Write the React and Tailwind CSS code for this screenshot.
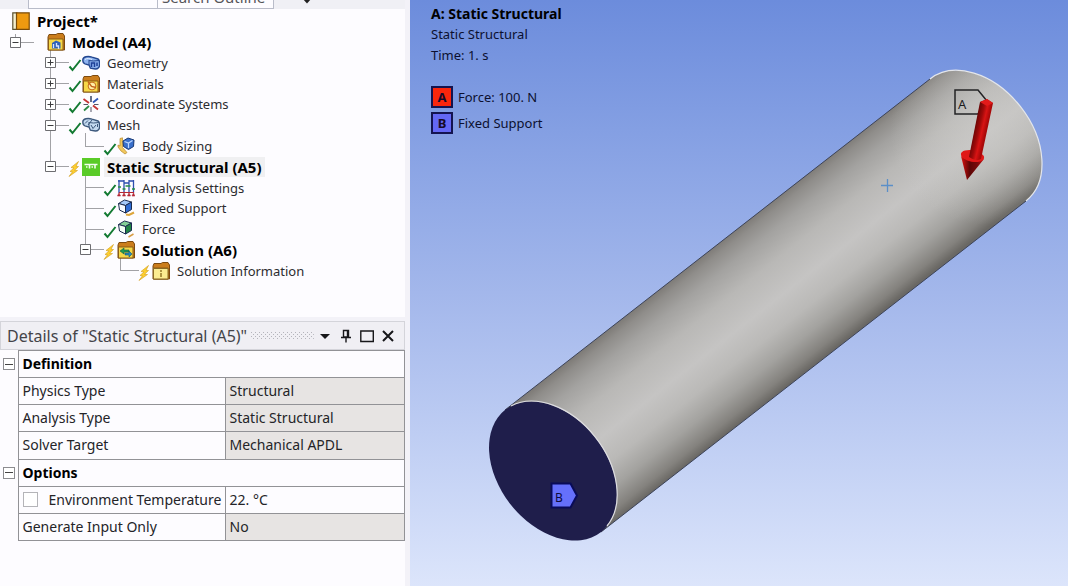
import React, { useState } from "react";

const TREE = [
  { level: 0, label: "Project*", icon: "book", bold: true },
  { level: 1, label: "Model (A4)", icon: "model", bold: true, toggle: "-", up: true },
  { level: 2, label: "Geometry", icon: "geometry", toggle: "+", status: "ok", up: true, down: true },
  { level: 2, label: "Materials", icon: "materials", toggle: "+", status: "ok", up: true, down: true },
  { level: 2, label: "Coordinate Systems", icon: "axes", toggle: "+", status: "ok", up: true, down: true },
  { level: 2, label: "Mesh", icon: "mesh", toggle: "-", status: "ok", up: true, down: true },
  { level: 3, label: "Body Sizing", icon: "sizing", status: "ok", up: true, rail: 1 },
  { level: 2, label: "Static Structural (A5)", icon: "static", bold: true, toggle: "-", status: "bolt", up: true, selected: true },
  { level: 3, label: "Analysis Settings", icon: "settings", status: "ok", up: true, down: true },
  { level: 3, label: "Fixed Support", icon: "support", status: "ok", up: true, down: true },
  { level: 3, label: "Force", icon: "force", status: "ok", up: true, down: true },
  { level: 3, label: "Solution (A6)", icon: "solution", bold: true, toggle: "-", status: "bolt", up: true },
  { level: 4, label: "Solution Information", icon: "info", status: "bolt", up: true },
];

function Folder({ children }) {
  return (
    <>
      <path d="M1 4 2 1.5h7l1.500-1H16l1.500 2.500V17H1z" fill="#cb7d1c" stroke="#7d4a10" />
      <path d="M1.500 6H16v11H1.500z" fill="#f6d848" stroke="#8a5c14" />
      {children}
    </>
  );
}

function Cube({ top, left, right }) {
  return (
    <g stroke="#1c2c50" strokeWidth="1" strokeLinejoin="round">
      <path d="M1.500 4.500 7.500 1l7 2-6 3.500z" fill={top} />
      <path d="m1.500 4.500 7 2v7.500L2.500 11z" fill={left} />
      <path d="m14.500 3-6 3.500V14l6-3.500z" fill={right} />
    </g>
  );
}

function Solid({ fill, stroke, children }) {
  return (
    <g stroke={stroke}>
      <path d="M.8 6C.8 2.600 6 1.800 10 3.200l6 1.800c1.800.8 1.600 3 1.600 5.500s-1.600 4.500-4.200 4.500l-5-.8L7 11 3 9.800C1.500 9.300.8 8 .8 6z" fill={fill} strokeWidth="1.400" />
      <path d="m6.500 6.500 5 .5 5.500-.5M7 11V7" fill="none" />
      {children}
    </g>
  );
}

const ICONS = {
  book: (
    <>
      <path d="M.8.8h4v16.500h-4z" fill="#f3efcf" stroke="#5b5230" strokeWidth="1.200" />
      <path d="M4.500.8h12.700v16.500H4.500z" fill="#ee9a10" stroke="#7a4b08" strokeWidth="1.200" />
    </>
  ),
  model: (
    <Folder>
      <path d="M5 15.500V10l4-2.500 4.500 2v6z" fill="#2f62b8" />
      <path d="M6.500 15v-4M9.500 10v3h2v3" stroke="#d4e4ff" strokeWidth="1.300" fill="none" />
    </Folder>
  ),
  geometry: (
    <Solid fill="#8db2ee" stroke="#23468f">
      <path d="M9.500 13V9h3v4M15 12V8.500" fill="none" stroke="#1d3f96" strokeWidth="1.500" />
      <path d="M3 5.500c2-1.500 5-1 7 0" fill="none" stroke="#e3eeff" />
    </Solid>
  ),
  mesh: (
    <Solid fill="#c4daf0" stroke="#3c587c">
      <path d="m9 9 2 3.500L14 9M15.500 8v3M3 7.500l3-3M6 9l4-5" fill="none" strokeWidth="1" />
    </Solid>
  ),
  materials: (
    <Folder>
      <circle cx="10" cy="11" r="3.900" fill="#fff0a8" stroke="#c46a18" />
      <path d="m6 6.500 3.500 5 4.500 1" stroke="#c4641c" strokeWidth="1.400" fill="none" />
    </Folder>
  ),
  axes: (
    <g strokeWidth="1.800" fill="none">
      <path d="M9 7V1" stroke="#55607c" />
      <path d="M7 8 1.500 4M11 10.500l5 4" stroke="#c53434" />
      <path d="m7 11-5 4.500" stroke="#2c8a44" />
      <path d="m11 7.500 5-4" stroke="#2e56b8" />
      <path d="M9 12v5M1.500 9.500H6M12 9.500h4.500" stroke="#556" strokeWidth="1" />
    </g>
  ),
  sizing: (
    <>
      <path d="M3 1.500 5.500.8v9.700l4.500 5-2 1.500-4-3L1 10V8l2 1z" fill="#f2c85c" stroke="#b88a2c" strokeWidth=".7" />
      <path d="m6 4 5-3 6 2-.5 6.500-5 3-5-3z" fill="#3a70cc" stroke="#173873" />
      <path d="m7.500 4.500 4 1.500 4-2.500M11.500 6.500v4.500" stroke="#bcd6ff" fill="none" strokeWidth="1.200" />
    </>
  ),
  static: (
    <>
      <path d="M0 0h18v18H0z" fill="#5acb28" />
      <path d="M2.500 6.500h13M4 9h1.500M7.500 7v3.500M9.500 9h1.500M13 7v3.500" stroke="#f4fff0" strokeWidth="1.600" />
    </>
  ),
  settings: (
    <g fill="none" strokeWidth="1.300">
      <path d="M2 1v13M7 1v13M12 1v13M16.500 1v13M1 2h6M12 2h5M7 4h5" stroke="#2d4faf" />
      <path d="M1 8h3M5.500 10h3M8.500 7h5M15 10h3" stroke="#259045" strokeWidth="1.600" />
      <path d="M2 13.500h15" stroke="#b62735" strokeWidth="1" />
      <path d="m.5 17 1.500-3 1.500 3zM5.500 17 7 14l1.500 3zM10.500 17l1.500-3 1.500 3zM15 17l1.500-3 1.300 3z" fill="#b62735" stroke="#b62735" strokeWidth=".6" />
    </g>
  ),
  support: (
    <>
      <Cube top="#a5c9fa" left="#f5f9ff" right="#2f6cd4" />
      <path d="m9 15.500 3 .5 5-2.500" stroke="#dda53a" strokeWidth="2" fill="none" />
    </>
  ),
  force: (
    <>
      <Cube top="#83cf96" left="#f2fff5" right="#218445" />
      <path d="m11.500 17 5-3" stroke="#d79d46" strokeWidth="1.500" />
    </>
  ),
  solution: (
    <Folder>
      <path d="m3 10 4-3v2h5v2H7v2z" fill="#1e9b53" stroke="#135c43" strokeWidth=".6" />
      <path d="m15 13-3 3v-2H8v-2h4v-2z" fill="#278bb9" stroke="#145578" strokeWidth=".6" />
    </Folder>
  ),
  info: (
    <Folder>
      <path d="M1.500 6.500h14.500V17H1.500z" fill="#fbec91" stroke="#8a6a24" />
      <path d="M9 8v2M9 11v4" stroke="#9b8030" strokeWidth="1.600" />
    </Folder>
  ),
};

function Guide({ item }) {
  const art = (
    <svg viewBox="0 0 35 21" className="block h-[21px] w-[35px] overflow-visible" aria-hidden="true">
      <g stroke="#a2a2a6" fill="none">
        {item.up && <path d={item.level === 1 ? "M7.500 2v6" : "M7.500-3v14"} />}
        {item.down && <path d="M7.500 10v12" />}
        <path d={item.toggle ? "M13 10.500h13" : "M7.500 10.500H26"} />
      </g>
      {item.toggle && (
        <g fill="none" stroke="#3c3c3e">
          <path d="M2.500 5.500h10v10h-10z" fill="#fff" stroke="#6d6d71" />
          <path d="M4.500 10.500h6" />
          {item.toggle === "+" && <path d="M7.500 7.500v6" />}
        </g>
      )}
      {item.status === "ok" && <path d="m26.500 14.500 3 3.500 8-10" fill="none" stroke="#137a32" strokeWidth="2" />}
      {item.status === "bolt" && (
        <path d="m35.500 5.500-7.500 6 3 .3-4 3.700 2.500.2L26 20.500l8.500-6-3-.2 4-3.800-2.500-.2z" fill="#ffd02e" stroke="#d09c1c" strokeWidth=".6" />
      )}
    </svg>
  );
  return item.toggle ? (
    <button type="button" aria-label={"Toggle " + item.label} className="shrink-0">{art}</button>
  ) : (
    <span className="shrink-0">{art}</span>
  );
}

function TreeRow({ item }) {
  return (
    <li className="flex items-center pl-2">
      {Array.from({ length: Math.max(0, item.level - 1) }, (_, i) => (
        <span key={i} className="flex w-[35px] shrink-0 self-stretch pl-[7px]">
          {item.rail === i && <span className="w-px bg-[#a2a2a6]" />}
        </span>
      ))}
      {item.level > 0 && <Guide item={item} />}
      <svg viewBox="0 0 18 18" className="relative ml-1 size-[18px] shrink-0" aria-hidden="true">{ICONS[item.icon]}</svg>
      <span
        className={
          "ml-1 px-[3px] whitespace-nowrap leading-5 " +
          (item.bold ? "text-[15px] font-bold text-black " : "text-[13px] text-[#2c2c30] ") +
          (item.selected ? "bg-[#f0f0f2]" : "")
        }
      >
        {item.label}
      </span>
    </li>
  );
}

function SearchStrip() {
  return (
    <form className="flex h-[9px] items-end overflow-hidden bg-[#f0f0f5] pl-7" onSubmit={(e) => e.preventDefault()}>
      <select aria-label="Search by" className="h-6 w-[130px] appearance-none border border-[#b9bcc9] bg-[#fdfcff]" />
      <input
        type="text"
        aria-label="Search"
        placeholder="Search Outline"
        className="h-6 w-[116px] border border-l-0 border-[#b9bcc9] bg-[#fdfcff] px-1 text-[15px] leading-5 placeholder:text-[#55555a]"
      />
      <button type="button" aria-label="Search options" className="ml-7 pb-[5px]">
        <svg viewBox="0 0 10 6" className="h-[6px] w-[10px]"><path d="M0 0h10L5 5.500z" fill="#222" /></svg>
      </button>
    </form>
  );
}

function CollapseButton({ label }) {
  return (
    <button type="button" aria-label={"Collapse " + label} className="flex size-3 items-center justify-center border border-[#8c8c90] bg-white">
      <span className="h-px w-2 bg-[#444]" />
    </button>
  );
}

function SectionRow({ label }) {
  return (
    <tr>
      <td className="pl-[3px]"><CollapseButton label={label} /></td>
      <th colSpan={2} scope="colgroup" className="border border-[#929296] bg-[#fdfcff] px-1 text-left font-bold text-black">{label}</th>
    </tr>
  );
}

function PropertyRow({ label, value, editable }) {
  const [checked, setChecked] = useState(false);
  return (
    <tr>
      <td />
      <th scope="row" className="border border-[#929296] bg-[#fdfcff] pl-1 text-left font-normal whitespace-nowrap">
        {editable ? (
          <label className="flex items-center gap-[11px]">
            <input
              type="checkbox"
              checked={checked}
              onChange={(e) => setChecked(e.target.checked)}
              className="size-[15px] shrink-0 appearance-none border border-[#b4b4b8] bg-white checked:bg-[#5577cc]"
            />
            {label}
          </label>
        ) : (
          label
        )}
      </th>
      <td className={"border border-[#929296] px-1 whitespace-nowrap " + (editable ? "bg-[#fdfcff]" : "bg-[#e7e4e3]")}>{value}</td>
    </tr>
  );
}

function Details() {
  return (
    <section className="flex-1 bg-[#fdfcff]">
      <header className="flex h-[29px] items-center border border-[#d4d4da] bg-[#f0eff4] px-[6px]">
        <h2 className="text-base whitespace-nowrap text-[#444449]">Details of "Static Structural (A5)"</h2>
        <svg className="ml-1 h-[7px] min-w-0 flex-1" aria-hidden="true">
          <defs>
            <pattern id="grip" width="4" height="4" patternUnits="userSpaceOnUse">
              <path d="M0 0h1v1H0zM2 2h1v1H2z" fill="#b4b4bb" />
            </pattern>
          </defs>
          <rect width="100%" height="7" fill="url(#grip)" />
        </svg>
        <div className="flex items-center gap-[7px] pr-[3px] pl-1 text-[#17171a]">
          <button type="button" aria-label="Window menu"><svg viewBox="0 0 14 14" className="size-[14px]"><path d="M2 5h10l-5 5z" fill="currentColor" /></svg></button>
          <button type="button" aria-label="Pin"><svg viewBox="0 0 14 14" className="size-[14px]"><path d="M4.500 1.500h5V8h-5zM2 8.500h10M7 8v5.500M8.500 2v6" fill="none" stroke="currentColor" strokeWidth="1.400" /></svg></button>
          <button type="button" aria-label="Maximize"><svg viewBox="0 0 14 14" className="size-[14px]"><path d="M.8 2h12.500v10.500H.8z" fill="none" stroke="currentColor" strokeWidth="1.400" /></svg></button>
          <button type="button" aria-label="Close"><svg viewBox="0 0 14 14" className="size-[14px]"><path d="m2 2 10 10M12 2 2 12" fill="none" stroke="currentColor" strokeWidth="2" /></svg></button>
        </div>
      </header>
      <table className="h-[191px] w-full table-fixed border-collapse text-sm text-[#242428]">
        <colgroup>
          <col className="w-[18px]" />
          <col className="w-[207px]" />
          <col />
        </colgroup>
        <tbody>
          <SectionRow label="Definition" />
          <PropertyRow label="Physics Type" value="Structural" />
          <PropertyRow label="Analysis Type" value="Static Structural" />
          <PropertyRow label="Solver Target" value="Mechanical APDL" />
          <SectionRow label="Options" />
          <PropertyRow label="Environment Temperature" value="22. °C" editable />
          <PropertyRow label="Generate Input Only" value="No" />
        </tbody>
      </table>
    </section>
  );
}

function LegendItem({ tag, label, color }) {
  return (
    <li className="flex items-center gap-[5px]">
      <span className={"flex size-[22px] items-center justify-center border-2 border-[#141450] text-[13px] font-bold text-[#160a28] " + color}>{tag}</span>
      {label}
    </li>
  );
}

function Scene() {
  return (
    <svg viewBox="410 0 658 586" preserveAspectRatio="xMinYMin meet" className="absolute inset-0 size-full" role="img" aria-label="Cylinder with a force and a fixed support">
      <defs>
        <linearGradient id="body" gradientUnits="userSpaceOnUse" x1="505" y1="410" x2="601" y2="532">
          <stop offset="0" stopColor="#7c7975" />
          <stop offset=".06" stopColor="#8f8d8a" />
          <stop offset=".16" stopColor="#a3a2a0" />
          <stop offset=".32" stopColor="#b9b8b6" />
          <stop offset=".52" stopColor="#c5c4c3" />
          <stop offset=".68" stopColor="#bab9b7" />
          <stop offset=".82" stopColor="#a3a29f" />
          <stop offset=".94" stopColor="#84827e" />
          <stop offset="1" stopColor="#6a6864" />
        </linearGradient>
        <radialGradient id="sheen" gradientUnits="userSpaceOnUse" cx="985" cy="130" r="95">
          <stop offset="0" stopColor="#cccbc8" stopOpacity=".6" />
          <stop offset="1" stopColor="#cccbc8" stopOpacity="0" />
        </radialGradient>
        <linearGradient id="shaft" gradientUnits="userSpaceOnUse" x1="973" y1="128" x2="986" y2="131">
          <stop offset="0" stopColor="#5c0404" />
          <stop offset=".45" stopColor="#a00a0a" />
          <stop offset=".7" stopColor="#d81414" />
          <stop offset="1" stopColor="#a80808" />
        </linearGradient>
        <linearGradient id="head" gradientUnits="userSpaceOnUse" x1="962" y1="0" x2="984" y2="0">
          <stop offset="0" stopColor="#d01010" />
          <stop offset=".35" stopColor="#5c0606" />
          <stop offset=".7" stopColor="#7c0a0a" />
          <stop offset="1" stopColor="#c81212" />
        </linearGradient>
      </defs>
      <path d="M505 410 930 79A77.600 54 52 0 1 1026 201L601 532z" fill="url(#body)" />
      <path d="M505 410 930 79A77.600 54 52 0 1 1026 201L601 532z" fill="url(#sheen)" />
      <path d="M505 410 930 79M1026 201 601 532" stroke="#3c4358" strokeWidth="1" fill="none" />
      <path d="M930 79A77.600 54 52 0 1 1026 201" stroke="#e4e6ea" strokeWidth="1.200" fill="none" />
      <ellipse cx="553" cy="471" rx="77.600" ry="54" transform="rotate(52 553 471)" fill="#1f1e4b" />
      <path d="M511 406A77.600 54 52 0 1 607 526" stroke="#dcdce0" strokeWidth="1.200" fill="none" />

      <path d="M955 90h23l9 11-9 13h-23z" fill="none" stroke="#232325" strokeWidth="1.500" />
      <text x="958" y="109" className="font-['Noto_Sans',sans-serif] text-[13px]" fill="#1c1c1e">A</text>
      <path d="M961 156q10 8 23 3l-17 21z" fill="url(#head)" />
      <ellipse cx="972.500" cy="156" rx="11.800" ry="5.800" transform="rotate(10 972.500 156)" fill="#e01818" />
      <path d="m980 102 7-3 6 4-12 56q-5 3-12-2z" fill="url(#shaft)" />
      <path d="m980 102 7-3 6 4-6 3z" fill="#e21a1a" />

      <path d="M881 185.500h12M887.500 179v13" stroke="#5b8fc8" strokeWidth="1.300" />

      <path d="M551.500 483.500h19l6.500 12-6.500 12h-19z" fill="#6570fb" stroke="#090b58" strokeWidth="2" />
      <text x="555" y="502" className="font-['Noto_Sans',sans-serif] text-[12px]" fill="#0d0b3c">B</text>
    </svg>
  );
}

export default function App() {
  return (
    <main className="flex min-h-screen bg-[#f3f2f8] font-['Noto_Sans','Open_Sans',sans-serif]">
      <aside className="flex w-[410px] shrink-0 flex-col pr-[5px]">
        <SearchStrip />
        <div className="mb-1 bg-[#fdfcff] pt-[2px] pb-9">
          <ul className="grid h-[270px] auto-rows-fr">{TREE.map((item) => <TreeRow key={item.label} item={item} />)}</ul>
        </div>
        <Details />
      </aside>
      <section className="relative flex-1 bg-linear-to-b from-[#6c8cdc] via-[#a3b7eb] to-[#dce5fb]">
        <Scene />
        <div className="relative pt-[3px] pl-[21px] text-[13px] leading-[21px] text-[#0c1030]">
          <h1 className="text-sm leading-[21px] font-bold text-black">A: Static Structural</h1>
          <p>Static Structural</p>
          <p>Time: 1. s</p>
          <ul className="mt-5 flex flex-col gap-1">
            <LegendItem tag="A" label="Force: 100. N" color="bg-[#f9260c]" />
            <LegendItem tag="B" label="Fixed Support" color="bg-[#6468f4]" />
          </ul>
        </div>
      </section>
    </main>
  );
}
